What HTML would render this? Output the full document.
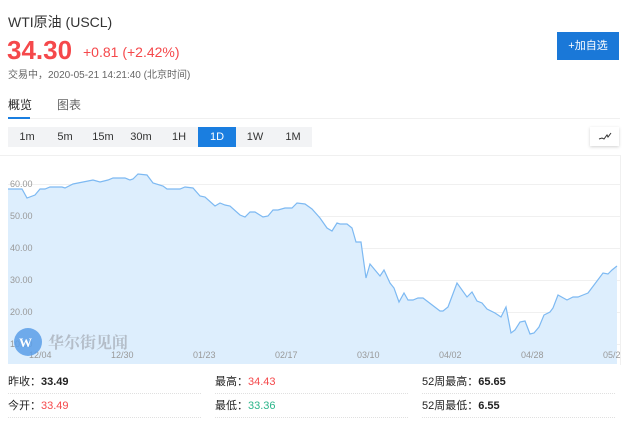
<!DOCTYPE html>
<html><head><meta charset="utf-8"><style>
body{margin:0;width:640px;height:429px;background:#fff;font-family:"Liberation Sans","Noto Sans CJK SC",sans-serif;color:#333;position:relative;overflow:hidden}
.a{position:absolute;white-space:nowrap}
.btns{position:absolute;left:8px;top:127px;width:304px;height:20px;background:#f2f3f5;display:flex}
.btns div{width:38px;text-align:center;font-size:11px;line-height:20px;color:#333}
.btns .on{background:#1a7ee0;color:#fff}
.st{position:absolute;font-size:11px;color:#222;width:193px;height:22px;line-height:22px;border-bottom:1px dotted #e0e0e0}
.r{color:#f5484b}.g{color:#2bb58a}
</style></head><body>
<div class="a" style="left:8px;top:12px;font-size:14px;color:#333">WTI原油 (USCL)</div>
<div class="a" style="left:7px;top:35px;font-size:26px;font-weight:bold;color:#f5484b">34.30</div>
<div class="a" style="left:83px;top:44px;font-size:14px;color:#f5484b">+0.81 (+2.42%)</div>
<div class="a" style="left:8px;top:66px;font-size:10px;color:#666">交易中，2020-05-21 14:21:40 (北京时间)</div>
<div class="a" style="left:557px;top:32px;width:62px;height:28px;background:#1a78d8;color:#fff;font-size:11px;line-height:28px;text-align:center">+加自选</div>
<div class="a" style="left:8px;top:96px;font-size:12px;color:#222">概览</div>
<div class="a" style="left:57px;top:96px;font-size:12px;color:#666">图表</div>
<div class="a" style="left:8px;top:117px;width:22px;height:2px;background:#1a7ee0"></div>
<div class="a" style="left:30px;top:118px;width:590px;height:1px;background:#f0f0f0"></div>
<div class="btns"><div>1m</div><div>5m</div><div>15m</div><div>30m</div><div>1H</div><div class="on">1D</div><div>1W</div><div>1M</div></div>
<div class="a" style="left:590px;top:127px;width:29px;height:19px;background:#fff;box-shadow:0 1px 3px rgba(0,0,0,.18)"><svg width="29" height="19"><path d="M9 12 L12 11 L14 12 L17 8 L18 10 L21 6" stroke="#333" fill="none" stroke-width="1"/></svg></div>
<div class="a" style="left:0;top:155px;width:620px;height:1px;background:#f0f0f0"></div>
<svg class="a" style="left:0;top:0" width="640" height="429">
<g stroke="#f0f0f0" stroke-width="1"><line x1="8" x2="620" y1="184.5" y2="184.5"/><line x1="8" x2="620" y1="216.5" y2="216.5"/><line x1="8" x2="620" y1="248.5" y2="248.5"/><line x1="8" x2="620" y1="280.5" y2="280.5"/><line x1="8" x2="620" y1="312.5" y2="312.5"/><line x1="8" x2="620" y1="344.5" y2="344.5"/><line x1="620.5" x2="620.5" y1="155" y2="365"/></g>
<path d="M8,189 L22,189 L27,198 L35,195 L40,189 L45,189 L50,187 L62,187 L65,188 L73,184 L93,180 L100,182 L108,180 L113,178 L125,178 L130,180 L133,179 L138,174 L147,175 L153,183 L163,186 L167,189 L180,189 L185,187 L193,188 L200,196 L205,197 L215,206 L220,203 L225,205 L230,206 L240,215 L245,217 L250,212 L255,212 L263,217 L268,216 L273,210 L278,210 L285,208 L292,208 L297,203 L305,204 L312,209 L320,218 L327,228 L332,231 L337,223 L340,224 L347,224 L352,228 L356,242 L361,242 L366,278 L370,264 L380,276 L384,270 L390,283 L394,288 L399,302 L404,293 L408,300 L413,300 L418,298 L423,298 L440,311 L443,311 L448,307 L457,283 L467,297 L472,292 L477,301 L482,303 L487,309 L495,313 L501,317 L506,307 L511,333 L515,330 L520,322 L525,321 L530,334 L534,333 L539,327 L544,315 L550,312 L553,308 L558,295 L567,300 L573,297 L578,297 L583,295 L588,293 L603,273 L608,274 L612,270 L617,266 L617,364 L8,364 Z" fill="#ddeefd" stroke="none"/>
<path d="M8,189 L22,189 L27,198 L35,195 L40,189 L45,189 L50,187 L62,187 L65,188 L73,184 L93,180 L100,182 L108,180 L113,178 L125,178 L130,180 L133,179 L138,174 L147,175 L153,183 L163,186 L167,189 L180,189 L185,187 L193,188 L200,196 L205,197 L215,206 L220,203 L225,205 L230,206 L240,215 L245,217 L250,212 L255,212 L263,217 L268,216 L273,210 L278,210 L285,208 L292,208 L297,203 L305,204 L312,209 L320,218 L327,228 L332,231 L337,223 L340,224 L347,224 L352,228 L356,242 L361,242 L366,278 L370,264 L380,276 L384,270 L390,283 L394,288 L399,302 L404,293 L408,300 L413,300 L418,298 L423,298 L440,311 L443,311 L448,307 L457,283 L467,297 L472,292 L477,301 L482,303 L487,309 L495,313 L501,317 L506,307 L511,333 L515,330 L520,322 L525,321 L530,334 L534,333 L539,327 L544,315 L550,312 L553,308 L558,295 L567,300 L573,297 L578,297 L583,295 L588,293 L603,273 L608,274 L612,270 L617,266" fill="none" stroke="#7db9f2" stroke-width="1.2"/>
<g font-size="9" fill="#999" font-family="Liberation Sans,sans-serif">
<text x="10" y="187">60.00</text><text x="10" y="219">50.00</text><text x="10" y="251">40.00</text><text x="10" y="283">30.00</text><text x="10" y="315">20.00</text><text x="10" y="347">10.00</text>
<text x="29" y="358">12/04</text><text x="111" y="358">12/30</text><text x="193" y="358">01/23</text><text x="275" y="358">02/17</text><text x="357" y="358">03/10</text><text x="439" y="358">04/02</text><text x="521" y="358">04/28</text><text x="603" y="358">05/2</text></g>
<circle cx="28" cy="342" r="14" fill="#5a9ee8" opacity=".85"/>
<text x="19" y="347" font-size="13" font-weight="bold" fill="#fff" font-family="Liberation Serif,serif">W</text>
<text x="48" y="348" font-size="16" font-weight="bold" fill="#aab2bc" opacity=".8" font-family="Noto Serif CJK SC,serif">华尔街见闻</text>
</svg>
<div class="st" style="left:8px;top:371px">昨收：<b>33.49</b></div>
<div class="st" style="left:215px;top:371px">最高：<span class="r">34.43</span></div>
<div class="st" style="left:422px;top:371px">52周最高：<b>65.65</b></div>
<div class="st" style="left:8px;top:395px">今开：<span class="r">33.49</span></div>
<div class="st" style="left:215px;top:395px">最低：<span class="g">33.36</span></div>
<div class="st" style="left:422px;top:395px">52周最低：<b>6.55</b></div>
</body></html>
